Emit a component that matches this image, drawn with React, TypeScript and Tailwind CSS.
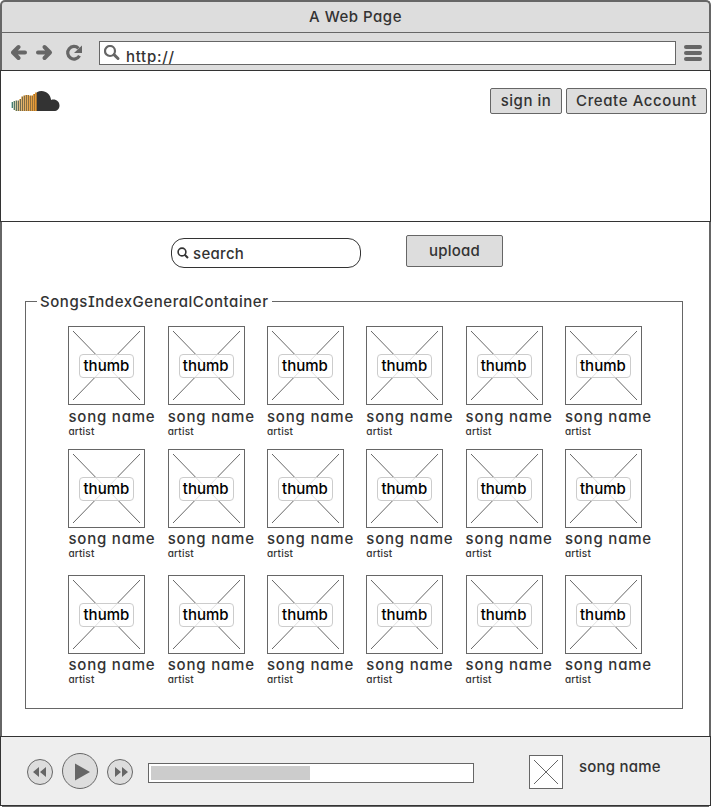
import React from "react";

const rows = [
  { id: "a", nameGap: "mt-[3px]", height: "h-[123px]" },
  { id: "b", nameGap: "mt-[2px]", height: "h-[126px]" },
  { id: "c", nameGap: "mt-[2px]", height: "h-[123px]" },
];
const columns = [0, 1, 2, 3, 4, 5];
const bars = [
  [12, 18], [11, 20], [10.5, 21], [10.5, 21], [9, 21], [6.5, 21], [5.5, 21],
  [5, 21], [5, 21], [5.5, 21], [5.5, 21], [4, 21], [2.5, 21],
];

function Logo() {
  return (
    <svg className="block h-[22px] w-[50px]" viewBox="0 0 50 22">
      <defs>
        <linearGradient id="light" x1="0" x2="26" y1="0" y2="0" gradientUnits="userSpaceOnUse">
          <stop offset="0" stopColor="#b4d8d2" />
          <stop offset="0.35" stopColor="#e2b878" />
          <stop offset="1" stopColor="#e8962c" />
        </linearGradient>
        <linearGradient id="dark" x1="0" x2="26" y1="0" y2="0" gradientUnits="userSpaceOnUse">
          <stop offset="0" stopColor="#3f7f78" />
          <stop offset="0.35" stopColor="#6f6a50" />
          <stop offset="1" stopColor="#a8742f" />
        </linearGradient>
      </defs>
      {bars.map(([top, bottom], i) => (
        <g key={i}>
          <rect x={i * 2} y={top} width="1" height={bottom - top} fill="url(#light)" />
          <rect x={1 + i * 2} y={top} width="1" height={bottom - top} fill="url(#dark)" />
        </g>
      ))}
      <path d="M26 21V2.2Q28 1 30.5 1c5 0 9 3.8 9.6 8.9 4.3-1.4 8.4 1.3 8.4 5.5 0 3.1-2.3 5.6-5.5 5.6z" fill="#333" />
    </svg>
  );
}

function Cross({ className }: { className: string }) {
  return (
    <svg className={className} viewBox="0 0 100 100" preserveAspectRatio="none">
      <path d="M0 0L100 100M100 0L0 100" stroke="#666" strokeWidth="1" vectorEffect="non-scaling-stroke" fill="none" />
    </svg>
  );
}

function Song({ nameGap }: { nameGap: string }) {
  return (
    <div className="w-[99.3px] shrink-0">
      <div className="relative flex h-[79px] w-[77px] items-center justify-center border border-[#666] bg-white">
        <Cross className="h-[69px] w-[67px]" />
        <span className="absolute top-[27px] left-[10px] flex h-[24px] w-[55px] items-center justify-center rounded-[4px] border border-[#ccc] bg-white/80 pr-[1px] text-[15px] tracking-[0px] text-black">
          thumb
        </span>
      </div>
      <div className={`${nameGap} h-[18px] text-[15px] leading-[18px] tracking-[0.8px]`}>song name</div>
      <div className="h-[10px] text-[10px] leading-[10px] tracking-[0.2px]">artist</div>
    </div>
  );
}

export default function App() {
  return (
    <div className="flex h-[807px] w-[711px] flex-col overflow-hidden bg-white font-['Inter',sans-serif] text-[15px] font-medium whitespace-nowrap text-[#333] [font-feature-settings:'cv11','cv08']">
      <div className="h-[70px] shrink-0 rounded-t-[5px] border-x-2 border-t-2 border-[#666] bg-[#ddd]">
        <div className="flex h-[31px] items-center justify-center border-b border-[#666] tracking-[0.5px]">
          A Web Page
        </div>
        <div className="flex h-[37px] pl-[9px]">
          <svg className="h-[37px] w-[88px] shrink-0" viewBox="11 33 88 37" fill="none" stroke="#666" strokeWidth="4" strokeLinecap="round" strokeLinejoin="round">
            <path d="M13.5 52.5H25M18.5 47l-5.5 5.5 5.5 5.5" />
            <path d="M49.5 52.5H38M44.5 47l5.5 5.5-5.5 5.5" />
            <path d="M78.5 48.3A6.3 6.3 0 1 0 79.5 55.8" strokeWidth="3.2" strokeLinecap="butt" />
            <path d="M82 45.5V53H74z" fill="#666" stroke="none" />
          </svg>
          <div className="mt-[8px] flex h-[24px] w-[577px] overflow-hidden border border-[#666] bg-white">
            <svg className="mt-[3px] ml-[4px] h-[17px] w-[18px] shrink-0" viewBox="0 0 18 17" fill="none" stroke="#666">
              <circle cx="6" cy="6" r="5" strokeWidth="2.2" />
              <path d="M10 9.7L14 13.5" strokeWidth="3" strokeLinecap="round" />
            </svg>
            <span className="mt-[5px] ml-[4px] h-[20px] leading-[20px] tracking-[0.7px]">http://</span>
          </div>
          <div className="mt-[12px] ml-[8px] flex w-[18px] flex-col gap-[2px]">
            <div className="h-[4px] rounded-full bg-[#666]" />
            <div className="h-[4px] rounded-full bg-[#666]" />
            <div className="h-[4px] rounded-full bg-[#666]" />
          </div>
        </div>
      </div>

      <header className="flex h-[152px] shrink-0 items-start border border-[#333] bg-white pt-[17px] pr-[3px] pl-[10px]">
        <div className="mt-[2px]">
          <Logo />
        </div>
        <button className="ml-auto h-[26px] w-[72px] rounded-[2px] border border-[#666] bg-[#ddd] tracking-[0.5px]">sign in</button>
        <button className="ml-[4px] h-[26px] w-[141px] rounded-[2px] border border-[#666] bg-[#ddd] tracking-[0.6px]">Create Account</button>
      </header>

      <main className="h-[514px] shrink-0 border-x-2 border-[#666] bg-white">
        <div className="flex h-[65px] items-start pl-[169px]">
          <div className="mt-[16px] flex h-[30px] w-[190px] items-center rounded-[13px] border border-[#333] pl-[5px]">
            <svg className="h-[12px] w-[12px]" viewBox="0 0 12 12" fill="none" stroke="#333">
              <circle cx="5" cy="5" r="3.9" strokeWidth="1.6" />
              <path d="M7.7 7.7L11 11" strokeWidth="2" />
            </svg>
            <span className="mt-[2px] ml-[4px] tracking-[0.3px]">search</span>
          </div>
          <button className="mt-[13px] ml-[45px] h-[32px] w-[97px] rounded-[2px] border border-[#666] bg-[#ddd] tracking-[0.2px]">upload</button>
        </div>
        <fieldset className="mx-[23px] h-[422px] w-[658px] border border-[#666] pl-[11px]">
          <legend className="h-[28px] w-[235px] pt-[1px] pl-[3px] leading-[28px] tracking-[0.55px]">SongsIndexGeneralContainer</legend>
          <div className="-mt-[4px] ml-[31.4px] pt-[15px]">
            {rows.map((row) => (
              <div key={row.id} className={`flex ${row.height}`}>
                {columns.map((c) => (
                  <Song key={c} nameGap={row.nameGap} />
                ))}
              </div>
            ))}
          </div>
        </fieldset>
      </main>

      <footer className="flex h-[70px] shrink-0 items-start border border-[#333] bg-[#eee]">
        <svg className="h-[68px] w-[147px] shrink-0" viewBox="1 737 147 68">
          <g fill="#ddd" stroke="#666">
            <circle cx="40" cy="772" r="12.5" />
            <circle cx="80" cy="771" r="17.5" />
            <circle cx="120" cy="772" r="12.5" />
          </g>
          <path d="M39 767v10l-6-5zM46 767v10l-6-5zM75 763.5v17l15-8.5zM115 767v10l6-5zM122 767v10l6-5z" fill="#666" />
        </svg>
        <div className="mt-[26px] h-[20px] w-[326px] border border-[#666] bg-white p-[2px]">
          <div className="h-[14px] w-[159px] bg-[#ccc]" />
        </div>
        <div className="mt-[18px] ml-[55px] flex h-[34px] w-[34px] items-center justify-center border border-[#666] bg-white">
          <Cross className="h-[24px] w-[24px]" />
        </div>
        <div className="mt-[20px] ml-[16px] leading-[20px] tracking-[0.2px]">song name</div>
      </footer>
      <div className="mx-[2px] h-[1px] bg-[#666]" />
    </div>
  );
}
